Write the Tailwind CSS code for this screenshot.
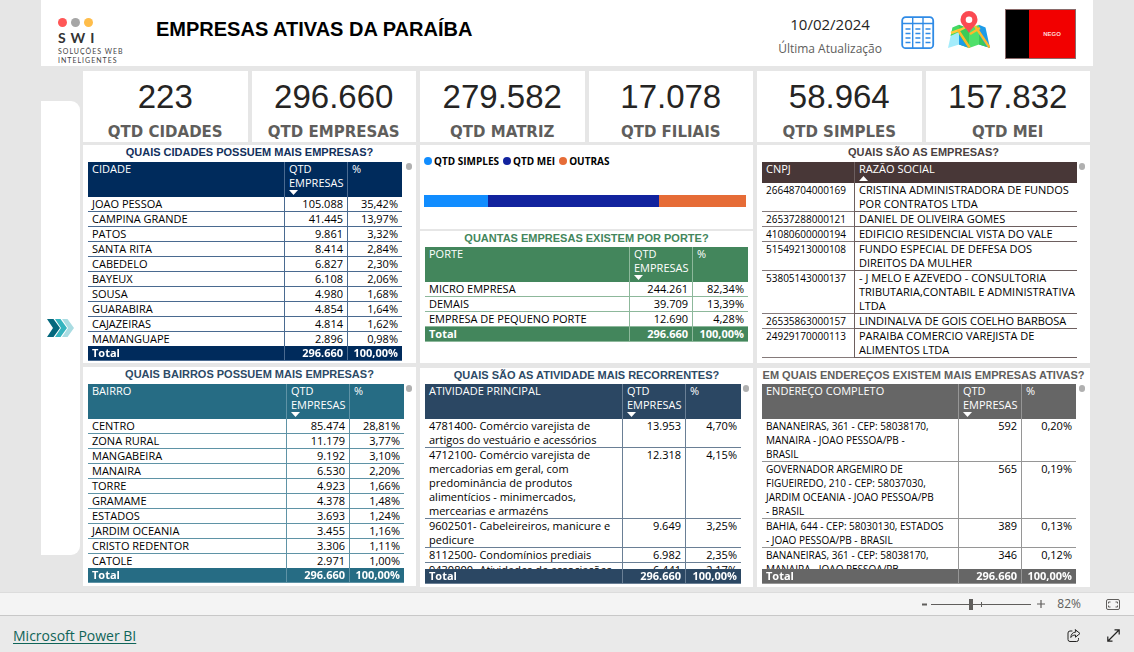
<!DOCTYPE html>
<html lang="pt-BR">
<head>
<meta charset="utf-8">
<meta name="viewport" content="width=device-width, initial-scale=1">
<title>Empresas Ativas da Paraíba</title>
<script src="https://cdn.jsdelivr.net/npm/@tailwindcss/browser@4"></script>
</head>
<body class="flex min-h-screen flex-col bg-[#e6e6e6] font-['Open_Sans','Noto_Sans',sans-serif] text-[11px] leading-[14px] text-black">

<main class="flex-1 px-[41px] pb-1">
  <header class="flex h-[66px] items-start bg-white pr-[17px] pl-[17px]">
    <div class="w-[98px] shrink-0 pt-[18px] font-['Lato',sans-serif] text-[#333]">
      <div class="flex gap-[4px]">
        <span class="size-[9px] rounded-full bg-[#ff5757]"></span>
        <span class="size-[9px] rounded-full bg-[#a6a6a6]"></span>
        <span class="size-[9px] rounded-full bg-[#ffbd4a]"></span>
      </div>
      <div class="mt-[1px] text-[14px] leading-[19px] font-bold tracking-[5px]">SWI</div>
      <div class="text-[7px] leading-[9px] tracking-[1px] text-[#444]">SOLUÇÕES WEB<br>INTELIGENTES</div>
    </div>
    <h1 class="pt-[17px] font-['Liberation_Sans',Arial,sans-serif] text-[20px] leading-[24px] font-bold whitespace-nowrap">EMPRESAS ATIVAS DA PARAÍBA</h1>
    <div class="ml-auto flex items-start">
      <div class="mr-[19px] pt-[12px] text-center">
        <div class="text-[15px] leading-[24px] text-[#252423]">10/02/2024</div>
        <div class="text-[12px] leading-[26px] text-[#605e5c]">Última Atualização</div>
      </div>
      <button type="button" aria-label="Tabela" class="mt-[16px] mr-[13px]">
        <svg width="34" height="34" viewBox="0 0 34 34" fill="none" stroke="#2f8be6" stroke-width="1.8">
          <rect x="1.2" y="1.2" width="31" height="31" rx="3.5"/>
          <path d="M1 7.5h31.500M11.700 1v31M22 1v31" stroke-width="1.400"/>
          <path d="M4.500 13h5M4.500 17.500h5M4.500 22h5M4.500 26.500h5M14.400 13h5M14.400 17.500h5M14.400 22h5M14.400 26.500h5M24.500 13h5M24.500 17.500h5M24.500 22h5M24.500 26.500h5" stroke-width="1.400"/>
        </svg>
      </button>
      <button type="button" aria-label="Mapa" class="mt-[11px] mr-[15px]">
        <svg width="42" height="38" viewBox="0 0 42 38">
          <path d="M4.500 16.500 11 13.800V33.500L0 37Z" fill="#a4ecfb"/>
          <path d="M4.500 16.500 11 13.800V21L2.500 25Z" fill="#45d960"/>
          <path d="M11 13.800 21 17.500V37L11 33.500Z" fill="#3acb58"/>
          <path d="M11 24 20 36.500 11 33.500Z" fill="#1d9be8"/>
          <path d="M21 17.500 31 13.800V33.500L21 37Z" fill="#4ee06a"/>
          <path d="M31 13.800 37.500 16.500 42 37 31 33.500Z" fill="#1d9be8"/>
          <path d="M31 24 39 36 31 33.500Z" fill="#3acb58"/>
          <path d="M3 22 13 18.500 17 16.500" fill="none" stroke="#ffcb3d" stroke-width="2.400"/>
          <path d="M10 19 21.500 36.500M27 15 41.500 36.500M22 23 32 17" fill="none" stroke="#fdb92c" stroke-width="2.400"/>
          <path d="M21 22C18.500 17 12.500 14 12.500 8.500a8.500 8.500 0 0 1 17 0C29.500 14 23.500 17 21 22Z" fill="#fb4a52"/>
          <circle cx="21" cy="8.800" r="3.300" fill="#fff"/>
        </svg>
      </button>
      <div class="mt-[9px] flex h-[50px] w-[71px] border border-[#8a6a6a]" role="img" aria-label="Bandeira da Paraíba">
        <div class="w-1/3 bg-black"></div>
        <div class="flex flex-1 items-center justify-center bg-[#f20000] font-['Liberation_Sans',Arial,sans-serif] text-[6px] font-bold text-[#ffd5d5]">NEGO</div>
      </div>
    </div>
  </header>

  <div class="flex">
    <aside class="mt-[35px] flex h-[454px] w-[39px] shrink-0 items-center justify-center rounded-r-[9px] bg-white">
      <button type="button" aria-label="Abrir menu">
        <svg width="27" height="18" viewBox="0 0 27 18">
          <path d="M0 0H6.500L13 9 6.500 18H0L6 9Z" fill="#04687d"/>
          <path d="M8 0H13.500L20 9 13.500 18H8L14 9Z" fill="#35b4bf"/>
          <path d="M15 0H20.500L27 9 20.500 18H15L21 9Z" fill="#a9dce2"/>
        </svg>
      </button>
    </aside>

    <div class="mr-[3px] ml-[3px] min-w-0 flex-1 pt-[5px]">
      <section class="grid grid-cols-6 gap-1 text-center [&_b]:block [&_b]:font-['DejaVu_Sans',sans-serif] [&_b]:text-[15px] [&_b]:leading-[26px] [&_b]:font-bold [&_b]:text-[#605e5c] [&>div]:h-[71px] [&>div]:bg-white [&>div]:pt-[4px] [&_span]:block [&_span]:font-['Liberation_Sans',Arial,sans-serif] [&_span]:text-[33px] [&_span]:leading-[44px] [&_span]:text-[#252423]">
        <div><span>223</span><b>QTD CIDADES</b></div>
        <div><span>296.660</span><b>QTD EMPRESAS</b></div>
        <div><span>279.582</span><b>QTD MATRIZ</b></div>
        <div><span>17.078</span><b>QTD FILIAIS</b></div>
        <div><span>58.964</span><b>QTD SIMPLES</b></div>
        <div><span>157.832</span><b>QTD MEI</b></div>
      </section>

      <div class="mt-[3px] grid grid-cols-3 gap-1 [&_h2]:text-center [&_h2]:font-['Liberation_Sans',Arial,sans-serif] [&_h2]:text-[11px] [&_h2]:leading-[14px] [&_h2]:font-bold [&_h2]:whitespace-nowrap [&_table]:w-full [&_table]:table-fixed [&_table]:border-separate [&_table]:border-spacing-0 [&_td]:border-b [&_td]:px-1 [&_td]:align-top [&_tfoot]:sticky [&_tfoot]:bottom-0 [&_tfoot]:font-bold [&_tfoot]:text-white [&_th]:px-1 [&_th]:text-left [&_th]:align-top [&_th]:font-normal [&_th]:text-white [&_th_svg]:mb-[2px] [&_th_svg]:block">

        <!-- Coluna 1 -->
        <div class="flex flex-col gap-1">
          <section class="h-[218px] bg-white">
            <h2 class="text-[#12305c]">QUAIS CIDADES POSSUEM MAIS EMPRESAS?</h2>
            <div class="mt-[3px] flex justify-between pr-1 pl-[5px]">
              <div class="h-[199px] min-w-0 flex-1 overflow-hidden">
                <table class="[&_td]:border-[#4a6a90] [&_tfoot]:bg-[#002b5c] [&_th]:bg-[#002b5c] [&_tr>*+*]:border-l [&_tr>*+*]:border-[#4a6a90] [&_td+td]:text-right">
                  <colgroup><col><col class="w-[63px]"><col class="w-[55px]"></colgroup>
                  <thead><tr><th>CIDADE</th><th>QTD EMPRESAS<svg width="9" height="5" viewBox="0 0 9 5"><path d="M0 0H9L4.500 5Z" fill="#fff"/></svg></th><th>%</th></tr></thead>
                  <tbody>
                    <tr><td>JOAO PESSOA</td><td>105.088</td><td>35,42%</td></tr>
                    <tr><td>CAMPINA GRANDE</td><td>41.445</td><td>13,97%</td></tr>
                    <tr><td>PATOS</td><td>9.861</td><td>3,32%</td></tr>
                    <tr><td>SANTA RITA</td><td>8.414</td><td>2,84%</td></tr>
                    <tr><td>CABEDELO</td><td>6.827</td><td>2,30%</td></tr>
                    <tr><td>BAYEUX</td><td>6.108</td><td>2,06%</td></tr>
                    <tr><td>SOUSA</td><td>4.980</td><td>1,68%</td></tr>
                    <tr><td>GUARABIRA</td><td>4.854</td><td>1,64%</td></tr>
                    <tr><td>CAJAZEIRAS</td><td>4.814</td><td>1,62%</td></tr>
                    <tr><td>MAMANGUAPE</td><td>2.896</td><td>0,98%</td></tr>
                  </tbody>
                  <tfoot><tr><td>Total</td><td>296.660</td><td>100,00%</td></tr></tfoot>
                </table>
              </div>
              <span class="mt-[1px] ml-[4px] h-[7px] w-[6px] shrink-0 rounded-full bg-[#b0b0b0]"></span>
            </div>
          </section>
          <section class="h-[219px] bg-white">
            <h2 class="text-[#2c4a66]">QUAIS BAIRROS POSSUEM MAIS EMPRESAS?</h2>
            <div class="mt-[3px] flex justify-between pr-1 pl-[5px]">
              <div class="h-[199px] min-w-0 flex-1 overflow-hidden">
                <table class="[&_td]:border-[#5f93a6] [&_tfoot]:bg-[#266c84] [&_th]:bg-[#266c84] [&_tr>*+*]:border-l [&_tr>*+*]:border-[#5f93a6] [&_td+td]:text-right">
                  <colgroup><col><col class="w-[63px]"><col class="w-[55px]"></colgroup>
                  <thead><tr><th>BAIRRO</th><th>QTD EMPRESAS<svg width="9" height="5" viewBox="0 0 9 5"><path d="M0 0H9L4.500 5Z" fill="#fff"/></svg></th><th>%</th></tr></thead>
                  <tbody>
                    <tr><td>CENTRO</td><td>85.474</td><td>28,81%</td></tr>
                    <tr><td>ZONA RURAL</td><td>11.179</td><td>3,77%</td></tr>
                    <tr><td>MANGABEIRA</td><td>9.192</td><td>3,10%</td></tr>
                    <tr><td>MANAIRA</td><td>6.530</td><td>2,20%</td></tr>
                    <tr><td>TORRE</td><td>4.923</td><td>1,66%</td></tr>
                    <tr><td>GRAMAME</td><td>4.378</td><td>1,48%</td></tr>
                    <tr><td>ESTADOS</td><td>3.693</td><td>1,24%</td></tr>
                    <tr><td>JARDIM OCEANIA</td><td>3.455</td><td>1,16%</td></tr>
                    <tr><td>CRISTO REDENTOR</td><td>3.306</td><td>1,11%</td></tr>
                    <tr><td>CATOLE</td><td>2.971</td><td>1,00%</td></tr>
                  </tbody>
                  <tfoot><tr><td>Total</td><td>296.660</td><td>100,00%</td></tr></tfoot>
                </table>
              </div>
              <span class="mt-[1px] ml-[2px] h-[7px] w-[6px] shrink-0 rounded-full bg-[#b0b0b0]"></span>
            </div>
          </section>
        </div>

        <!-- Coluna 2 -->
        <div class="flex flex-col">
          <section class="h-[84px] bg-white px-1 pt-[9px]">
            <ul class="flex gap-[4px] text-[10px] font-bold [&_i]:size-[8px] [&_i]:rounded-full [&_li]:flex [&_li]:items-center [&_li]:gap-[2px]">
              <li><i class="bg-[#118dff]"></i>QTD SIMPLES</li>
              <li><i class="bg-[#12239e]"></i>QTD MEI</li>
              <li><i class="bg-[#e66c37]"></i>OUTRAS</li>
            </ul>
            <div class="mt-[27px] mr-[3px] flex h-[12px]" role="img" aria-label="Proporção de SIMPLES, MEI e outras">
              <div class="bg-[#118dff]" style="width:19.9%"></div>
              <div class="bg-[#12239e]" style="width:53.2%"></div>
              <div class="bg-[#e66c37]" style="width:26.9%"></div>
            </div>
          </section>
          <section class="mt-[2px] h-[132px] bg-white">
            <h2 class="text-[#43865c]">QUANTAS EMPRESAS EXISTEM POR PORTE?</h2>
            <div class="mt-[2px] pr-[5px] pl-[5px]">
              <table class="[&_td]:border-[#8db89b] [&_tfoot]:bg-[#43865c] [&_th]:bg-[#43865c] [&_tr>*+*]:border-l [&_tr>*+*]:border-[#8db89b] [&_td+td]:text-right">
                <colgroup><col><col class="w-[63px]"><col class="w-[56px]"></colgroup>
                <thead><tr><th>PORTE</th><th>QTD EMPRESAS<svg width="9" height="5" viewBox="0 0 9 5"><path d="M0 0H9L4.500 5Z" fill="#fff"/></svg></th><th>%</th></tr></thead>
                <tbody>
                  <tr><td>MICRO EMPRESA</td><td>244.261</td><td>82,34%</td></tr>
                  <tr><td>DEMAIS</td><td>39.709</td><td>13,39%</td></tr>
                  <tr><td>EMPRESA DE PEQUENO PORTE</td><td>12.690</td><td>4,28%</td></tr>
                </tbody>
                <tfoot><tr><td>Total</td><td>296.660</td><td>100,00%</td></tr></tfoot>
              </table>
            </div>
          </section>
          <section class="mt-[5px] h-[219px] bg-white">
            <h2 class="text-[#2c4a66]">QUAIS SÃO AS ATIVIDADE MAIS RECORRENTES?</h2>
            <div class="mt-[2px] flex justify-between pr-1 pl-[5px]">
              <div class="h-[200px] min-w-0 flex-1 overflow-hidden">
                <table class="[&_td]:border-[#6a7f95] [&_tfoot]:bg-[#2b4763] [&_th]:bg-[#2b4763] [&_tr>*+*]:border-l [&_tr>*+*]:border-[#6a7f95] [&_td+td]:text-right">
                  <colgroup><col><col class="w-[63px]"><col class="w-[56px]"></colgroup>
                  <thead><tr><th>ATIVIDADE PRINCIPAL</th><th>QTD EMPRESAS<svg width="9" height="5" viewBox="0 0 9 5"><path d="M0 0H9L4.500 5Z" fill="#fff"/></svg></th><th>%</th></tr></thead>
                  <tbody>
                    <tr><td>4781400- Comércio varejista de artigos do vestuário e acessórios</td><td>13.953</td><td>4,70%</td></tr>
                    <tr><td>4712100- Comércio varejista de mercadorias em geral, com predominância de produtos alimentícios - minimercados, mercearias e armazéns</td><td>12.318</td><td>4,15%</td></tr>
                    <tr><td>9602501- Cabeleireiros, manicure e pedicure</td><td>9.649</td><td>3,25%</td></tr>
                    <tr><td>8112500- Condomínios prediais</td><td>6.982</td><td>2,35%</td></tr>
                    <tr><td>9430800- Atividades de associações de defesa de direitos sociais</td><td>6.441</td><td>2,17%</td></tr>
                  </tbody>
                  <tfoot><tr><td>Total</td><td>296.660</td><td>100,00%</td></tr></tfoot>
                </table>
              </div>
              <span class="mt-[1px] ml-[2px] h-[7px] w-[6px] shrink-0 rounded-full bg-[#b0b0b0]"></span>
            </div>
          </section>
        </div>

        <!-- Coluna 3 -->
        <div class="flex flex-col gap-[5px]">
          <section class="h-[218px] bg-white">
            <h2 class="text-[#4a3f3f]">QUAIS SÃO AS EMPRESAS?</h2>
            <div class="mt-[3px] flex justify-between pr-[5px] pl-[5px]">
              <div class="h-[198px] min-w-0 flex-1 overflow-hidden">
                <table class="[&_td]:border-[#857a7a] [&_td:first-child]:text-[10px] [&_th]:bg-[#483737] [&_tr>*+*]:border-l [&_tr>*+*]:border-[#6d5f5f]">
                  <colgroup><col class="w-[92px]"><col></colgroup>
                  <thead><tr><th>CNPJ</th><th>RAZÃO SOCIAL<svg width="9" height="5" viewBox="0 0 9 5"><path d="M0 5H9L4.500 0Z" fill="#fff"/></svg></th></tr></thead>
                  <tbody>
                    <tr><td>26648704000169</td><td>CRISTINA ADMINISTRADORA DE FUNDOS POR CONTRATOS LTDA</td></tr>
                    <tr><td>26537288000121</td><td>DANIEL DE OLIVEIRA GOMES</td></tr>
                    <tr><td>41080600000194</td><td>EDIFICIO RESIDENCIAL VISTA DO VALE</td></tr>
                    <tr><td>51549213000108</td><td>FUNDO ESPECIAL DE DEFESA DOS DIREITOS DA MULHER</td></tr>
                    <tr><td>53805143000137</td><td class="whitespace-nowrap">- J MELO E AZEVEDO - CONSULTORIA<br>TRIBUTARIA,CONTABIL E ADMINISTRATIVA<br>LTDA</td></tr>
                    <tr><td>26535863000157</td><td>LINDINALVA DE GOIS COELHO BARBOSA</td></tr>
                    <tr><td>24929170000113</td><td>PARAIBA COMERCIO VAREJISTA DE ALIMENTOS LTDA</td></tr>
                  </tbody>
                </table>
              </div>
              <span class="mt-[1px] ml-[2px] h-[7px] w-[6px] shrink-0 rounded-full bg-[#b0b0b0]"></span>
            </div>
          </section>
          <section class="h-[219px] bg-white">
            <h2 class="text-[#605e5c]">EM QUAIS ENDEREÇOS EXISTEM MAIS EMPRESAS ATIVAS?</h2>
            <div class="mt-[2px] flex justify-between pr-[5px] pl-[5px]">
              <div class="h-[200px] min-w-0 flex-1 overflow-hidden">
                <table class="[&_td]:border-[#969696] [&_tbody_td:first-child]:text-[10px] [&_tfoot]:bg-[#666] [&_th]:bg-[#666] [&_tr>*+*]:border-l [&_tr>*+*]:border-[#969696] [&_td+td]:text-right">
                  <colgroup><col><col class="w-[63px]"><col class="w-[55px]"></colgroup>
                  <thead><tr><th>ENDEREÇO COMPLETO</th><th>QTD EMPRESAS<svg width="9" height="5" viewBox="0 0 9 5"><path d="M0 0H9L4.500 5Z" fill="#fff"/></svg></th><th>%</th></tr></thead>
                  <tbody>
                    <tr><td>BANANEIRAS, 361 - CEP: 58038170,<br>MANAIRA - JOAO PESSOA/PB -<br>BRASIL</td><td>592</td><td>0,20%</td></tr>
                    <tr><td>GOVERNADOR ARGEMIRO DE<br>FIGUEIREDO, 210 - CEP: 58037030,<br>JARDIM OCEANIA - JOAO PESSOA/PB<br>- BRASIL</td><td>565</td><td>0,19%</td></tr>
                    <tr><td>BAHIA, 644 - CEP: 58030130, ESTADOS<br>- JOAO PESSOA/PB - BRASIL</td><td>389</td><td>0,13%</td></tr>
                    <tr><td>BANANEIRAS, 361 - CEP: 58038170,<br>MANAIRA - JOAO PESSOA/PB -<br>BRASIL</td><td>346</td><td>0,12%</td></tr>
                  </tbody>
                  <tfoot><tr><td>Total</td><td>296.660</td><td>100,00%</td></tr></tfoot>
                </table>
              </div>
              <span class="mt-[1px] ml-[3px] h-[7px] w-[6px] shrink-0 rounded-full bg-[#b0b0b0]"></span>
            </div>
          </section>
        </div>
      </div>
    </div>
  </div>
</main>

<div class="flex h-[24px] items-center justify-end border-t border-b border-t-[#dcdcdc] border-b-[#c8c8c8] bg-[#f4f4f4] pr-[14px] text-[#605e5c]">
  <button type="button" aria-label="Reduzir zoom" class="mr-[4px] w-[5px]"><svg width="5" height="14" viewBox="0 0 5 14"><path d="M0 7.500h5" stroke="#605e5c" stroke-width="2"/></svg></button>
  <div class="relative flex items-center">
    <input type="range" min="10" max="190" value="82" aria-label="Zoom" class="h-[1px] w-[100px] appearance-none bg-[#605e5c] [&::-webkit-slider-thumb]:h-[11px] [&::-webkit-slider-thumb]:w-[4px] [&::-webkit-slider-thumb]:appearance-none [&::-webkit-slider-thumb]:bg-[#605e5c]">
    <span class="absolute left-1/2 h-[5px] w-px bg-[#605e5c]"></span>
  </div>
  <button type="button" aria-label="Ampliar zoom" class="ml-[6px]"><svg width="8" height="8" viewBox="0 0 8 8"><path d="M0 4h8M4 0v8" stroke="#605e5c" stroke-width="1.200"/></svg></button>
  <span class="w-[46px] pr-[10px] text-right text-[12px]">82%</span>
  <button type="button" aria-label="Ajustar à página" class="ml-[15px]"><svg width="14" height="11" viewBox="0 0 14 11" fill="none" stroke="#605e5c"><rect x=".5" y=".5" width="13" height="10" rx="1.500"/><path d="M2.500 4.500V3H4.500M9.500 3H11.500V4.500M11.500 6.500V8H9.500M4.500 8H2.500V6.500"/></svg></button>
</div>

<footer class="flex h-[36px] items-center justify-between bg-[#eaeaea] pr-[14px] pl-[13px]">
  <a href="#" class="pt-[4px] text-[14px] leading-[18px] text-[#0f6458] underline underline-offset-2">Microsoft Power BI</a>
  <div class="flex items-center gap-[26px] pt-[3px]">
    <button type="button" aria-label="Compartilhar"><svg width="14" height="13" viewBox="0 0 14 13" fill="none" stroke="#252423" stroke-linejoin="round" stroke-linecap="round"><path d="M5 2H3A2 2 0 0 0 1 4V10.500A2 2 0 0 0 3 12.500H9.500A2 2 0 0 0 11.500 10.500V9.500"/><path d="M8.500 .800 13 4.500 8.500 8.200V6C6 6 4.700 7 3.800 8.500 4 5.500 5.500 3.200 8.500 3Z"/></svg></button>
    <button type="button" aria-label="Tela cheia"><svg width="13" height="13" viewBox="0 0 13 13" fill="none" stroke="#252423" stroke-width="1.200"><path d="M1 12 12 1M7.500 .800H12.200V5.500M.800 7.500V12.200H5.500"/></svg></button>
  </div>
</footer>
</body>
</html>
